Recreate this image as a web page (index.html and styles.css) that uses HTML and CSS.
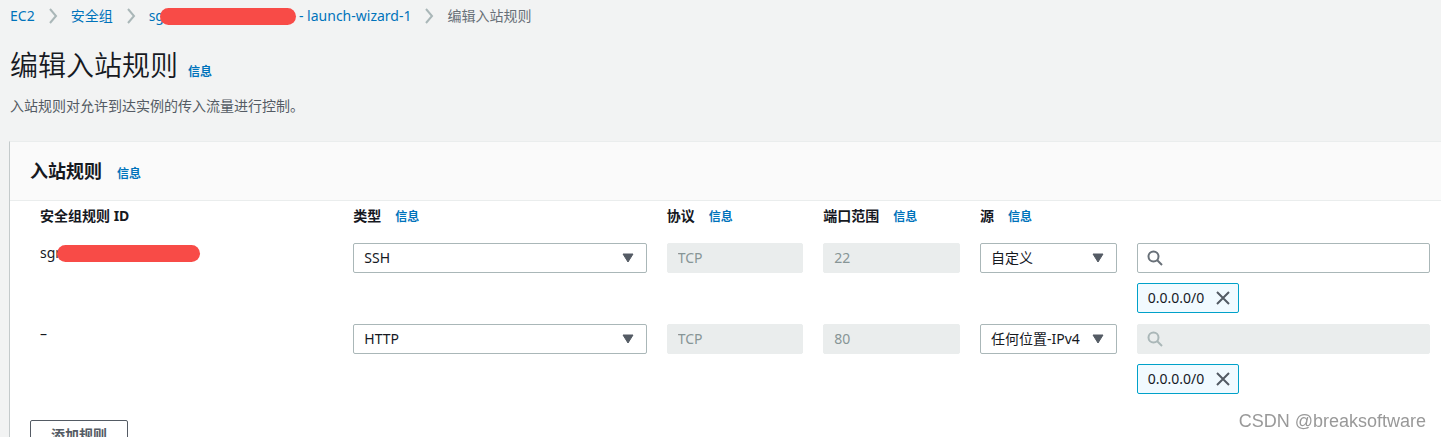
FILE: index.html
```
<!DOCTYPE html>
<html lang="zh-CN">
<head>
    <meta charset="UTF-8">
    <meta name="viewport" content="width=device-width, initial-scale=1.0">
    <title>编辑入站规则</title>
    <link rel="stylesheet" href="styles.css">
</head>
<body>
    <nav class="breadcrumb">
        <a href="#">EC2</a>
        <svg class="chevron" viewBox="0 0 10 16"><path d="M2 1l6 7-6 7"/></svg>
        <a href="#">安全组</a>
        <svg class="chevron" viewBox="0 0 10 16"><path d="M2 1l6 7-6 7"/></svg>
        <a href="#" class="masked">sg<span class="mask mask-group"></span>- launch-wizard-1</a>
        <svg class="chevron" viewBox="0 0 10 16"><path d="M2 1l6 7-6 7"/></svg>
        <span class="current">编辑入站规则</span>
    </nav>

    <header class="page-header">
        <div class="title-row">
            <h1>编辑入站规则</h1>
            <a href="#" class="info">信息</a>
        </div>
        <p>入站规则对允许到达实例的传入流量进行控制。</p>
    </header>

    <main class="panel">
        <div class="panel-header">
            <h2>入站规则</h2>
            <a href="#" class="info">信息</a>
        </div>

        <form class="panel-body">
            <!-- 列标题 -->
            <div class="rule-grid rule-head">
                <div class="wide"><span>安全组规则 ID</span></div>
                <div class="wide"><label id="l-type" for="type1">类型</label><a href="#" class="info">信息</a></div>
                <div><label id="l-proto" for="proto1">协议</label><a href="#" class="info">信息</a></div>
                <div><label id="l-port" for="port1">端口范围</label><a href="#" class="info">信息</a></div>
                <div><label id="l-source" for="source1">源</label><a href="#" class="info">信息</a></div>
            </div>

            <!-- SSH -->
            <div class="rule-grid rule">
                <div class="wide rule-id masked">sgr<span class="mask mask-rule"></span></div>
                <div class="wide select">
                    <select id="type1" aria-labelledby="l-type"><option>SSH</option><option>HTTP</option></select>
                    <svg class="caret" viewBox="0 0 12 10"><path d="M1 1h10L6 9z"/></svg>
                </div>
                <div><input type="text" id="proto1" aria-labelledby="l-proto" value="TCP" disabled></div>
                <div><input type="text" id="port1" aria-labelledby="l-port" value="22" disabled></div>
                <div class="select">
                    <select id="source1" aria-labelledby="l-source"><option>自定义</option><option>任何位置-IPv4</option></select>
                    <svg class="caret" viewBox="0 0 12 10"><path d="M1 1h10L6 9z"/></svg>
                </div>
                <div class="wide">
                    <div class="search">
                        <input type="search" aria-labelledby="l-source">
                        <svg class="search-icon" viewBox="0 0 16 16"><circle cx="6.5" cy="6.5" r="5"/><path d="m10 10 5 5"/></svg>
                    </div>
                    <div class="token">
                        <span>0.0.0.0/0</span>
                        <button type="button" aria-label="0.0.0.0/0"><svg viewBox="0 0 14 14"><path d="m1 1 12 12M13 1 1 13"/></svg></button>
                    </div>
                </div>
            </div>

            <!-- HTTP -->
            <div class="rule-grid rule">
                <div class="wide rule-id">–</div>
                <div class="wide select">
                    <select id="type2" aria-labelledby="l-type"><option>HTTP</option><option>SSH</option></select>
                    <svg class="caret" viewBox="0 0 12 10"><path d="M1 1h10L6 9z"/></svg>
                </div>
                <div><input type="text" id="proto2" aria-labelledby="l-proto" value="TCP" disabled></div>
                <div><input type="text" id="port2" aria-labelledby="l-port" value="80" disabled></div>
                <div class="select">
                    <select id="source2" aria-labelledby="l-source"><option>任何位置-IPv4</option><option>自定义</option></select>
                    <svg class="caret" viewBox="0 0 12 10"><path d="M1 1h10L6 9z"/></svg>
                </div>
                <div class="wide">
                    <div class="search">
                        <input type="search" aria-labelledby="l-source" disabled>
                        <svg class="search-icon" viewBox="0 0 16 16"><circle cx="6.5" cy="6.5" r="5"/><path d="m10 10 5 5"/></svg>
                    </div>
                    <div class="token">
                        <span>0.0.0.0/0</span>
                        <button type="button" aria-label="0.0.0.0/0"><svg viewBox="0 0 14 14"><path d="m1 1 12 12M13 1 1 13"/></svg></button>
                    </div>
                </div>
            </div>

            <button type="button" class="add-rule">添加规则</button>
        </form>
    </main>

    <div class="watermark">CSDN @breaksoftware</div>
</body>
</html>
```
FILE: styles.css
```
* {
    box-sizing: border-box;
}

html {
    height: 100%;
    overflow: hidden;
}

body {
    margin: 0;
    padding: 6px 0 0 9px;
    background: #f2f3f3;
    color: #16191f;
    font-family: "Noto Sans", "Noto Sans CJK SC", sans-serif;
    font-size: 14px;
    line-height: 20px;
}

a {
    color: #0073bb;
    text-decoration: none;
}

a:hover {
    text-decoration: underline;
}

.info {
    font-size: 12px;
    font-weight: bold;
}

/* 导航路径 */
.breadcrumb {
    display: flex;
    align-items: center;
    gap: 13px;
    padding-left: 1px;
}

.chevron {
    width: 10px;
    height: 16px;
    fill: none;
    stroke: #aab7b8;
    stroke-width: 2;
}

.current {
    color: #687078;
}

.masked {
    display: flex;
    align-items: center;
}

.mask {
    height: 17px;
    border-radius: 9px;
    background: #f84b47;
}

.mask-group {
    width: 136px;
    margin: 0 3px 0 -4px;
}

.mask-rule {
    width: 143px;
    margin-left: -4px;
}

/* 页面标题 */
.page-header {
    padding: 19px 0 25px 1px;
}

.title-row {
    display: flex;
    align-items: baseline;
    gap: 10px;
}

h1 {
    margin: 0;
    font-size: 28px;
    font-weight: 350;
    line-height: 40px;
}

.page-header p {
    margin: 11px 0 0;
    color: #545b64;
}

/* 规则面板 */
.panel {
    background: #fff;
    border-top: 1px solid #eaeded;
    border-left: 1px solid #c4cacb;
}

.panel-header {
    display: flex;
    align-items: baseline;
    gap: 15px;
    padding: 15px 20px;
    background: #fafafa;
    border-bottom: 1px solid #eaeded;
}

h2 {
    margin: 0;
    font-size: 18px;
    line-height: 28px;
}

.panel-body {
    padding: 5px 11px 20px 20px;
}

.rule-grid {
    display: grid;
    grid-template-columns: repeat(9, minmax(0, 1fr));
    column-gap: 20px;
    padding-left: 10px;
}

.wide {
    grid-column: span 2;
}

.rule-head {
    margin-bottom: 16px;
    font-weight: bold;
}

.rule-head > div {
    display: flex;
    align-items: baseline;
    gap: 14px;
}

.rule {
    margin-bottom: 11px;
}

.rule-id {
    height: 20px;
}

/* 输入控件 */
select,
input {
    display: block;
    width: 100%;
    height: 30px;
    padding: 0 10px;
    border: 1px solid #aab7b8;
    border-radius: 2px;
    background: #fff;
    color: #16191f;
    font: inherit;
    appearance: none;
}

input {
    padding-bottom: 2px;
}

input:disabled {
    border-color: #eaeded;
    background: #eaeded;
    color: #879596;
}

.select,
.search {
    position: relative;
}

.caret {
    position: absolute;
    top: 10px;
    right: 13px;
    width: 12px;
    height: 10px;
    fill: #545b64;
    stroke: #545b64;
    stroke-linejoin: round;
    pointer-events: none;
}

.search input {
    padding-left: 34px;
}

.search-icon {
    position: absolute;
    top: 7px;
    left: 10px;
    width: 16px;
    height: 16px;
    fill: none;
    stroke: #687078;
    stroke-width: 2;
    pointer-events: none;
}

input:disabled + .search-icon {
    stroke: #aab7b8;
}

.token {
    display: inline-flex;
    align-items: center;
    gap: 12px;
    height: 30px;
    margin-top: 10px;
    padding: 0 8px 0 10px;
    border: 1px solid #00a1c9;
    border-radius: 2px;
    background: #f1faff;
    vertical-align: top;
}

.token button {
    display: flex;
    padding: 0;
    border: none;
    background: none;
    cursor: pointer;
}

.token svg {
    width: 14px;
    height: 14px;
    fill: none;
    stroke: #545b64;
    stroke-width: 2;
}

.add-rule {
    height: 30px;
    margin-top: 15px;
    padding: 0 20px;
    border: 1px solid #545b64;
    border-radius: 2px;
    background: #fff;
    color: #545b64;
    font: inherit;
    font-weight: bold;
    cursor: pointer;
}

.watermark {
    position: fixed;
    right: 15px;
    bottom: 6px;
    color: #999;
    font-family: "Liberation Sans", Arial, sans-serif;
    font-size: 18px;
    text-shadow: 1px 1px 0 #fff;
}
```
